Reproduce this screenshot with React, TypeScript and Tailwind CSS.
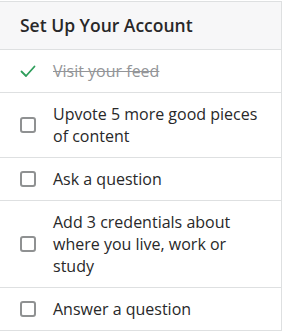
import React from "react";

const tasks = [
  { label: "Visit your feed", done: true },
  { label: "Upvote 5 more good pieces of content", done: false },
  { label: "Ask a question", done: false },
  { label: "Add 3 credentials about where you live, work or study", done: false },
  { label: "Answer a question", done: false },
];

const Check = () => (
  <svg width="16" height="16" viewBox="0 0 16 16" fill="none">
    <path d="M1.5 8.5 L6 13 L14.5 3.5" stroke="#2e9e5b" strokeWidth="1.8" strokeLinecap="round" strokeLinejoin="round" />
  </svg>
);

export default function App() {
  return (
    <div className="min-h-screen bg-white" style={{ fontFamily: '"Open Sans", "Noto Sans", sans-serif' }}>
      <div className="mt-px w-[282px] border-t border-r border-[#dee0e1] text-[#282829]">
        {/* Header */}
        <div className="h-[48px] bg-[#f7f7f8] border-b border-[#dee0e1] pl-5 flex items-center">
          <h2 className="text-[17.5px] font-semibold leading-none">Set Up Your Account</h2>
        </div>

        {/* Tasks */}
        {tasks.map((t) => (
          <div key={t.label} className="flex items-center gap-[17px] pl-5 pr-4 py-[10px] border-b border-[#dee0e1]">
            <div className="w-4 h-4 shrink-0 flex items-center justify-center">
              {t.done ? (
                <Check />
              ) : (
                <span className="block w-4 h-4 rounded-[3px] border-2 border-[#8f9192]" />
              )}
            </div>
            <span
              className={
                t.done
                  ? "text-[16px] leading-[22px] text-[#939598] line-through"
                  : "text-[16px] leading-[22px]"
              }
            >
              {t.label}
            </span>
          </div>
        ))}
      </div>
    </div>
  );
}
